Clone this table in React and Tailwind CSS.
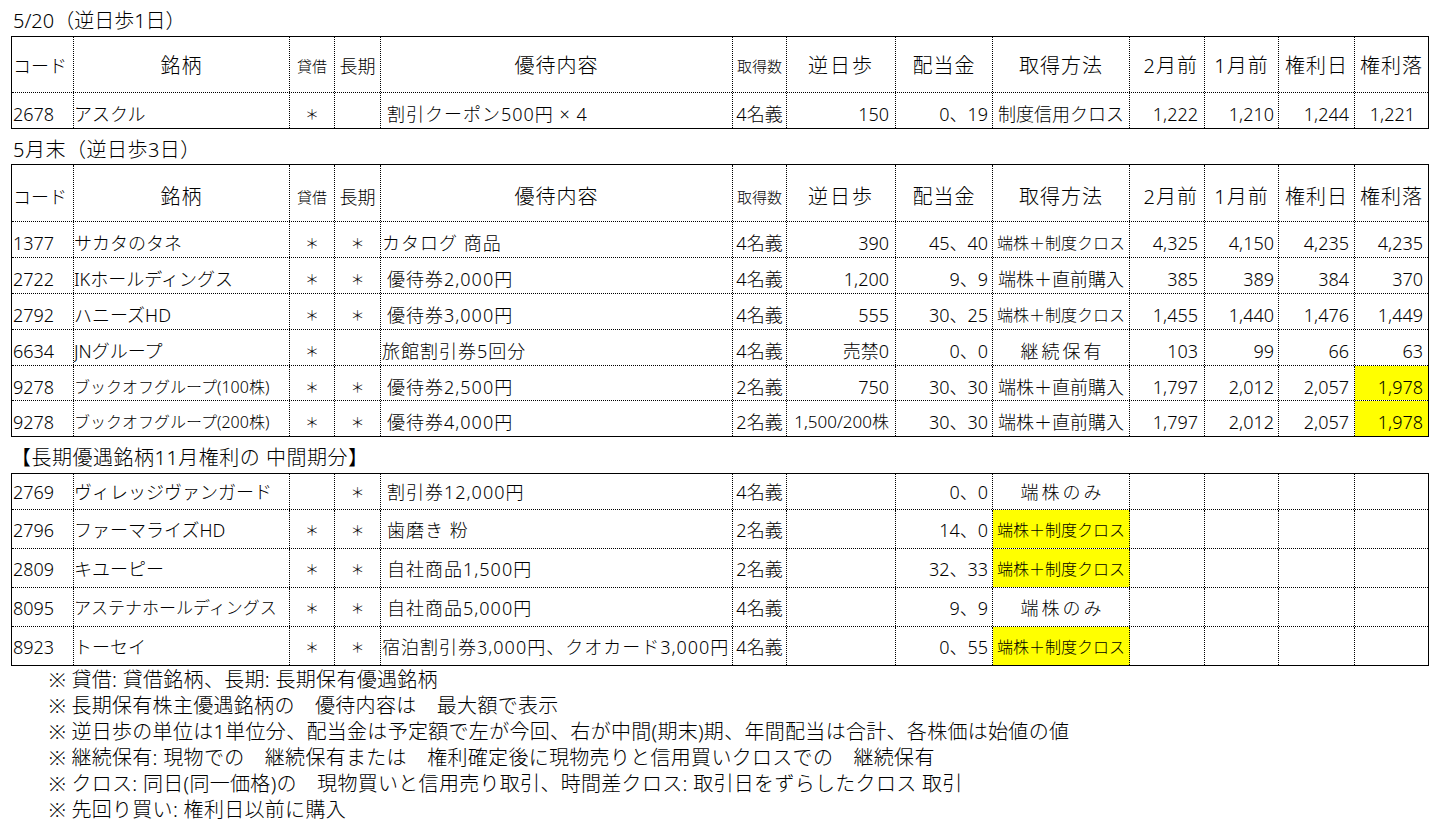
import React from "react";

const FONT = "[font-family:'Noto_Sans','Noto_Sans_CJK_JP',sans-serif]";

const widths = [
  "w-[62px]", "w-[216px]", "w-[45px]", "w-[46px]", "w-[352px]", "w-[54px]", "w-[109px]",
  "w-[97px]", "w-[137px]", "w-[75px]", "w-[74px]", "w-[76px]", "w-[73px]",
];

const dataAlign = [
  "justify-start pl-[1px]",
  "justify-start pl-0",
  "justify-center",
  "justify-center",
  "justify-start pl-[6px] tracking-[1px]",
  "justify-center",
  "justify-end pr-[6px]",
  "justify-end pr-[4px]",
  "justify-center",
  "justify-end pr-[6px]",
  "justify-end pr-[4px]",
  "justify-end pr-[5px]",
  "justify-end pr-[5px]",
];

const headers = [
  { t: "コード", a: "justify-start pl-[1px]", c: "text-[18px]" },
  { t: "銘柄", a: "justify-center", c: "text-[20px] tracking-[1px]" },
  { t: "貸借", a: "justify-center", c: "text-[15px]" },
  { t: "長期", a: "justify-center", c: "text-[18px]" },
  { t: "優待内容", a: "justify-center", c: "text-[20px] tracking-[1px]" },
  { t: "取得数", a: "justify-center", c: "text-[15px]" },
  { t: "逆日歩", a: "justify-center", c: "text-[20px] tracking-[2px]" },
  { t: "配当金", a: "justify-center", c: "text-[20px] tracking-[1px]" },
  { t: "取得方法", a: "justify-center", c: "text-[20px] tracking-[1px]" },
  { t: "2月前", a: "justify-end pr-[6px]", c: "text-[20px] tracking-[1px]" },
  { t: "1月前", a: "justify-center", c: "text-[20px] tracking-[1px]" },
  { t: "権利日", a: "justify-center", c: "text-[20px] tracking-[1px]" },
  { t: "権利落", a: "justify-center", c: "text-[20px] tracking-[1px]" },
];

function Cell({ i, className = "", children }) {
  const last = i === 12;
  return (
    <div
      className={`${widths[i]} shrink-0 flex items-center whitespace-nowrap overflow-hidden ${
        last ? "" : "border-r border-dotted border-black"
      } ${className}`}
    >
      {children}
    </div>
  );
}

function Row({ cells, h, last, pad, isHeader }) {
  return (
    <div className={`flex ${h} ${last ? "" : "border-b border-dotted border-black"}`}>
      {cells.map((c, i) => {
        const o = c !== null && typeof c === "object" ? c : { t: c };
        const align = o.a ?? (isHeader ? "" : dataAlign[i]);
        return (
          <Cell
            key={i}
            i={i}
            className={`${align} ${pad} ${o.y ? "bg-[#ffff00]" : ""} ${o.c ?? ""}`}
          >
            {o.t}
          </Cell>
        );
      })}
    </div>
  );
}

const AST = { t: "＊", c: "text-[14px]" };
const CROSS = { t: "端株＋制度クロス", c: "text-[16px]" };
const CROSS_Y = { t: "端株＋制度クロス", c: "text-[16px]", y: true };
const CHOKU = "端株＋直前購入";
const HAKABU = { t: "端株のみ", c: "tracking-[3px] pl-[3px]" };
const L = (t) => ({ t, a: "justify-start pl-[1px] tracking-[1px]" });

const table1 = [
  ["2678", "アスクル", AST, "", "割引クーポン500円 × 4", "4名義", "150", "0、19", "制度信用クロス", "1,222", "1,210", "1,244", { t: "1,221", a: "justify-end pr-[13px]" }],
];

const table2 = [
  ["1377", "サカタのタネ", AST, AST, L("カタログ 商品"), "4名義", "390", "45、40", CROSS, "4,325", "4,150", "4,235", "4,235"],
  ["2722", "IKホールディングス", AST, AST, "優待券2,000円", "4名義", "1,200", "9、9", CHOKU, "385", "389", "384", "370"],
  ["2792", "ハニーズHD", AST, AST, "優待券3,000円", "4名義", "555", "30、25", CROSS, "1,455", "1,440", "1,476", "1,449"],
  ["6634", "JNグループ", AST, "", L("旅館割引券5回分"), "4名義", "売禁0", "0、0", { t: "継続保有", c: "tracking-[3px] pl-[3px]" }, "103", "99", "66", "63"],
  ["9278", { t: "ブックオフグループ(100株)", c: "text-[16px]" }, AST, AST, "優待券2,500円", "2名義", "750", "30、30", CHOKU, "1,797", "2,012", "2,057", { t: "1,978", y: true }],
  ["9278", { t: "ブックオフグループ(200株)", c: "text-[16px]" }, AST, AST, "優待券4,000円", "2名義", { t: "1,500/200株", c: "text-[17px]" }, "30、30", CHOKU, "1,797", "2,012", "2,057", { t: "1,978", y: true }],
];
const table2H = ["h-[36px]", "h-[36px]", "h-[36px]", "h-[36px]", "h-[35px]", "h-[35px]"];

const table3 = [
  ["2769", "ヴィレッジヴァンガード", "", AST, "割引券12,000円", "4名義", "", "0、0", HAKABU, "", "", "", ""],
  ["2796", "ファーマライズHD", AST, AST, "歯磨き 粉", "2名義", "", "14、0", CROSS_Y, "", "", "", ""],
  ["2809", "キユーピー", AST, AST, "自社商品1,500円", "2名義", "", "32、33", CROSS_Y, "", "", "", ""],
  ["8095", { t: "アステナホールディングス", c: "text-[17px]" }, AST, AST, "自社商品5,000円", "4名義", "", "9、9", HAKABU, "", "", "", ""],
  ["8923", "トーセイ", AST, AST, L("宿泊割引券3,000円、クオカード3,000円"), "4名義", "", "0、55", CROSS_Y, "", "", "", ""],
];
const table3H = ["h-[36px]", "h-[39px]", "h-[39px]", "h-[39px]", "h-[38px]"];

const notes = [
  "※ 貸借: 貸借銘柄、長期: 長期保有優遇銘柄",
  "※ 長期保有株主優遇銘柄の　優待内容は　最大額で表示",
  "※ 逆日歩の単位は1単位分、配当金は予定額で左が今回、右が中間(期末)期、年間配当は合計、各株価は始値の値",
  "※ 継続保有: 現物での　継続保有または　権利確定後に現物売りと信用買いクロスでの　継続保有",
  "※ クロス: 同日(同一価格)の　現物買いと信用売り取引、時間差クロス: 取引日をずらしたクロス 取引",
  "※ 先回り買い: 権利日以前に購入",
];

function Table({ children }) {
  return <div className="w-[1418px] border border-black flex flex-col">{children}</div>;
}

export default function App() {
  return (
    <div className={`${FONT} font-light text-black bg-white w-[1442px] h-[836px] overflow-hidden text-[18px] leading-[24px]`}>
      <div className="ml-[11px] flex flex-col">
        <div className="h-[36px] flex items-center pt-[6px] pl-[2px] text-[20px]">5/20（逆日歩1日）</div>
        <Table>
          <Row cells={headers} h="h-[56px]" pad="pt-[2px]" isHeader />
          <Row cells={table1[0]} h="h-[35px]" last pad="pt-[7px]" />
        </Table>

        <div className="h-[35px] flex items-center pt-[7px] pl-[2px] text-[20px] tracking-[0.5px]">5月末（逆日歩3日）</div>
        <Table>
          <Row cells={headers} h="h-[57px]" pad="pt-[8px]" isHeader />
          {table2.map((r, i) => (
            <Row key={i} cells={r} h={table2H[i]} last={i === table2.length - 1} pad="pt-[7px]" />
          ))}
        </Table>

        <div className="h-[36px] flex items-center pt-[6px] text-[20px] tracking-[0.5px]">【長期優遇銘柄11月権利の 中間期分】</div>
        <Table>
          {table3.map((r, i) => (
            <Row key={i} cells={r} h={table3H[i]} last={i === table3.length - 1} pad="pt-[1px]" />
          ))}
        </Table>

        <div className="pl-[38px] pt-[1px] text-[20px] tracking-[0.3px] leading-[26px] flex flex-col">
          {notes.map((n, i) => (
            <div key={i} className="whitespace-nowrap">{n}</div>
          ))}
        </div>
      </div>
    </div>
  );
}
